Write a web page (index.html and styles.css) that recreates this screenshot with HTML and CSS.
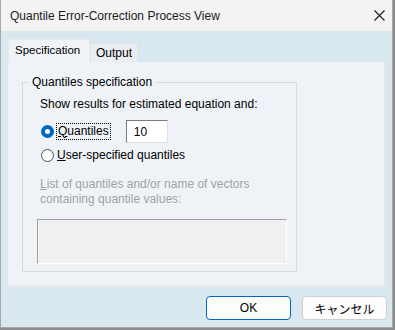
FILE: index.html
```html
<!DOCTYPE html>
<html lang="en">
<head>
  <meta charset="UTF-8">
  <title>Quantile Error-Correction Process View</title>
  <link rel="stylesheet" href="styles.css">
</head>
<body>
  <div class="window">
    <div class="titlebar">
      <span class="title">Quantile Error-Correction Process View</span>
      <svg class="close" width="11" height="11" viewBox="0 0 11 11">
        <path d="M0.5 0.5 L10.5 10.5 M10.5 0.5 L0.5 10.5" stroke="#1a1a1a" stroke-width="1.1" fill="none"/>
      </svg>
    </div>

    <div class="content">
      <div class="tabs">
        <div class="tab active">Specification</div>
        <div class="tab">Output</div>
      </div>

      <div class="panel">
        <div class="group">
          <div class="legend">Quantiles specification</div>
          <div class="intro">Show results for estimated equation and:</div>

          <div class="row">
            <span class="radio checked"></span>
            <span class="focus"><u>Q</u>uantiles</span>
            <div class="numbox">10</div>
          </div>
          <div class="row">
            <span class="radio"></span>
            <span><u>U</u>ser-specified quantiles</span>
          </div>

          <div class="disabled-label">
            <u>L</u>ist of quantiles and/or name of vectors<br>
            containing quantile values:
          </div>
          <div class="listbox"></div>
        </div>
      </div>

      <div class="buttons">
        <button class="btn default">OK</button>
        <button class="btn">キャンセル</button>
      </div>
    </div>
  </div>
</body>
</html>
```

FILE: styles.css
```css
* { box-sizing: border-box; margin: 0; padding: 0; }
body {
  font-family: "Liberation Sans", "Noto Sans CJK JP", sans-serif;
  font-size: 12px;
  color: #000;
  background: #8c8c8c;
}
.window {
  width: 393px;
  height: 328px;
  border-left: 1px solid #a8a8a8;
  border-right: 1px solid #a8a8a8;
  border-bottom: 1px solid #a8a8a8;
  background: #d9e7ee;
}
.titlebar {
  height: 31px;
  background: #f3f3f3;
  display: flex;
  align-items: center;
  justify-content: space-between;
  padding: 0 7px 0 9px;
}
.title { font-size: 12px; color: #1b1b1b; }
.content { padding: 8px 7px 0 7px; }
.tabs {
  display: flex;
  align-items: flex-end;
  height: 23px;
}
.tab {
  height: 19px;
  padding: 0 5px;
  line-height: 18px;
  background: #e9eef1;
  border: 1px solid #dfe4e8;
  border-bottom: none;
  font-size: 12px;
}
.tab.active {
  height: 23px;
  width: 82px;
  padding-left: 6px;
  line-height: 20px;
  background: #eff3f7;
  border-color: #e6ebee;
  font-size: 11.5px;
}
.panel {
  height: 225px;
  width: 378px;
  background: #eff3f7;
  border-right: 2px solid #e4e8eb;
  border-bottom: 2px solid #e4e8eb;
  padding: 20px 0 0 14px;
}
.group {
  position: relative;
  width: 275px;
  height: 190px;
  border: 1px solid #d3dbe0;
  padding: 14px 0 0 17px;
}
.legend {
  position: absolute;
  top: -8px;
  left: 6px;
  padding: 0 3px;
  background: #eff3f7;
}
.intro { margin-bottom: 8px; }
.row {
  display: flex;
  align-items: center;
  height: 24px;
}
.radio {
  width: 13px;
  height: 13px;
  border: 1px solid #505050;
  border-radius: 50%;
  background: #fff;
  margin: 0 3px 0 1px;
  flex: none;
}
.radio.checked {
  border: 4px solid #0067c0;
  background: #fff;
}
.focus {
  outline: 1px dotted #000;
  padding: 0 1px;
  line-height: 15px;
}
.numbox {
  margin-left: 16px;
  width: 42px;
  height: 23px;
  border: 1px solid #7a7a7a;
  border-right-color: #e0e0e0;
  border-bottom-color: #e0e0e0;
  background: #fff;
  padding: 4px 0 0 7px;
}
.disabled-label {
  margin-top: 10px;
  color: #a2a2a2;
  line-height: 15px;
}
.listbox {
  margin: 12px 0 0 -3px;
  width: 250px;
  height: 45px;
  background: #f0f0f0;
  border: 1px solid #a0a0a0;
  border-right-color: #fff;
  border-bottom-color: #fff;
}
.buttons {
  display: flex;
  justify-content: flex-end;
  gap: 11px;
  margin: 9px -2px 0 0;
}
.btn {
  width: 85px;
  height: 24px;
  font-family: "Liberation Sans", "Noto Sans CJK JP", sans-serif;
  font-size: 12px;
  background: #fdfdfd;
  border: 1px solid #d0d0d0;
  border-radius: 4px;
  color: #000;
}
.btn.default {
  border: 1px solid #0067c0;
}
```
